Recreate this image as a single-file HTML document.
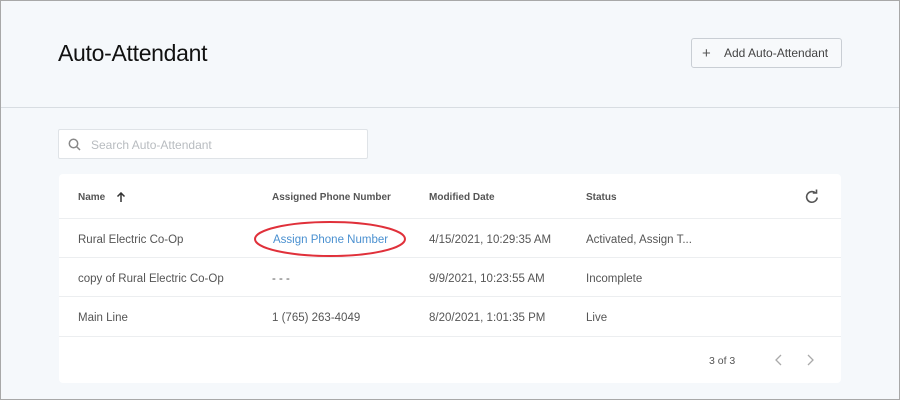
<!DOCTYPE html>
<html><head><style>
*{box-sizing:border-box;margin:0;padding:0}
body{width:900px;height:400px;background:#f5f8fb;font-family:"Liberation Sans",Arial,sans-serif;position:relative;overflow:hidden}
.frame{position:absolute;left:0;top:0;width:900px;height:400px;border:1px solid #a8a8a8;pointer-events:none}
.abs{position:absolute}
h1{position:absolute;left:58px;top:40px;font-size:23px;font-weight:normal;color:#111;letter-spacing:-0.3px}
.btn{left:691px;top:38px;width:151px;height:30px;border:1px solid #c9ced4;border-radius:3px;background:#f7f9fb;font-size:12px;color:#444;line-height:29px}
.hr{left:0;top:107px;width:900px;height:1px;background:#d8dde2}
.search{left:58px;top:129px;width:310px;height:30px;border:1px solid #dfe3e7;border-radius:2px;background:#fff}
.search span{position:absolute;left:32px;top:8px;font-size:12px;color:#b8bcc0}
.card{left:59px;top:174px;width:782px;height:209px;background:#fff;border-radius:4px}
.row{position:absolute;left:0;width:782px;border-bottom:1px solid #eceef0}
.c{position:absolute;font-size:11.5px;color:#555;white-space:nowrap}
.h{font-size:10px;font-weight:bold;color:#555}
</style></head><body>
<h1>Auto-Attendant</h1>
<div class="abs btn"><span style="position:absolute;left:10px;font-size:15px;color:#555">+</span><span style="position:absolute;left:32px">Add Auto-Attendant</span></div>
<div class="abs hr"></div>
<div class="abs search"><svg class="abs" style="left:9px;top:8px" width="13" height="13" viewBox="0 0 13 13"><circle cx="5.5" cy="5.5" r="4.2" fill="none" stroke="#888" stroke-width="1.5"/><line x1="8.6" y1="8.6" x2="12" y2="12" stroke="#888" stroke-width="1.5"/></svg><span>Search Auto-Attendant</span></div>
<div class="abs card">
 <div class="row" style="top:0;height:45px">
  <div class="c h" style="left:19px;top:18px">Name</div>
  <svg class="abs" style="left:57px;top:18px" width="10" height="11" viewBox="0 0 10 11"><path d="M5 10V1M1.5 4.5L5 1l3.5 3.5" fill="none" stroke="#333" stroke-width="1.5"/></svg>
  <div class="c h" style="left:213px;top:18px">Assigned Phone Number</div>
  <div class="c h" style="left:370px;top:18px">Modified Date</div>
  <div class="c h" style="left:527px;top:18px">Status</div>
  <svg class="abs" style="left:745px;top:15px" width="16" height="16" viewBox="0 0 16 16"><path d="M13.2 8.5A5.3 5.3 0 1 1 11.5 4" fill="none" stroke="#555" stroke-width="1.6"/><path d="M8.8 3.9H12.5V0.5" fill="none" stroke="#555" stroke-width="1.6"/></svg>
 </div>
 <div class="row" style="top:45px;height:39px">
  <div class="c" style="left:19px;top:15px">Rural Electric Co-Op</div>
  <div class="c" style="left:214px;top:15px;color:#4a90d0">Assign Phone Number</div>
  <div class="c" style="left:370px;top:15px">4/15/2021, 10:29:35 AM</div>
  <div class="c" style="left:527px;top:15px">Activated, Assign T...</div>
 </div>
 <div class="row" style="top:84px;height:39px">
  <div class="c" style="left:19px;top:15px">copy of Rural Electric Co-Op</div>
  <div class="c" style="left:213px;top:15px">- - -</div>
  <div class="c" style="left:370px;top:15px">9/9/2021, 10:23:55 AM</div>
  <div class="c" style="left:527px;top:15px">Incomplete</div>
 </div>
 <div class="row" style="top:123px;height:40px">
  <div class="c" style="left:19px;top:15px">Main Line</div>
  <div class="c" style="left:213px;top:15px">1 (765) 263-4049</div>
  <div class="c" style="left:370px;top:15px">8/20/2021, 1:01:35 PM</div>
  <div class="c" style="left:527px;top:15px">Live</div>
 </div>
 <div class="c" style="left:650px;top:181px;font-size:10.5px">3 of 3</div>
 <svg class="abs" style="left:715px;top:180px" width="10" height="12" viewBox="0 0 10 12"><path d="M7 1L2 6l5 5" fill="none" stroke="#aaa" stroke-width="1.3"/></svg>
 <svg class="abs" style="left:746px;top:180px" width="10" height="12" viewBox="0 0 10 12"><path d="M3 1l5 5-5 5" fill="none" stroke="#aaa" stroke-width="1.3"/></svg>
</div>
<svg class="abs" style="left:253px;top:220px" width="154" height="38" viewBox="0 0 154 38"><ellipse cx="77" cy="19" rx="75" ry="17" fill="none" stroke="#e0303a" stroke-width="2"/></svg>
<div class="frame"></div>
</body></html>
